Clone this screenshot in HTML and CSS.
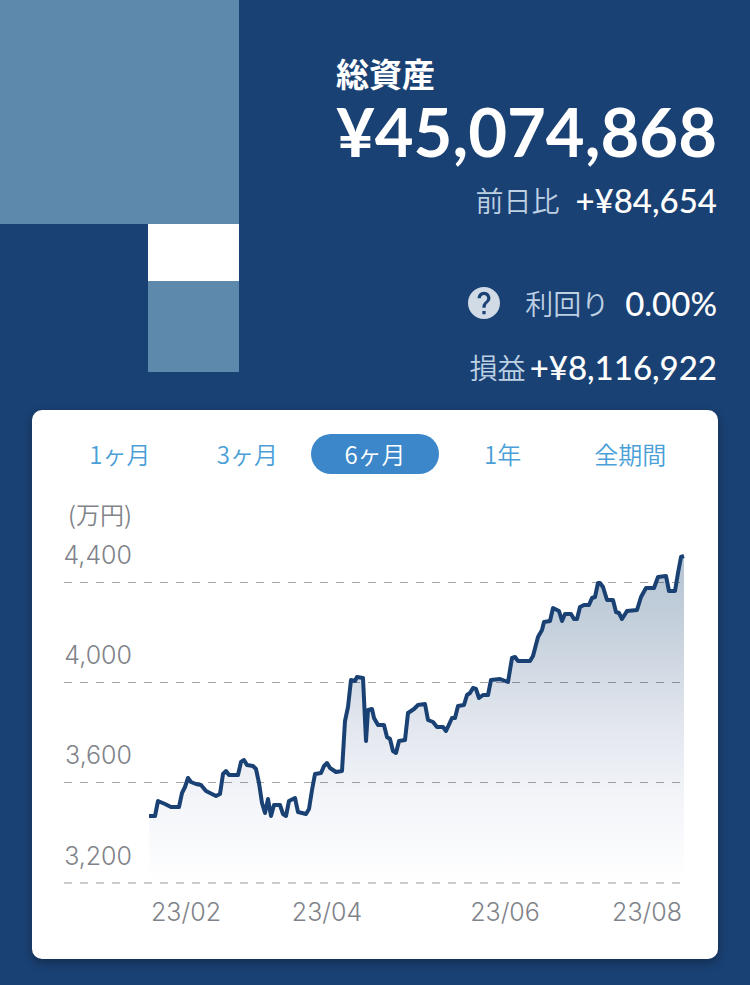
FILE: index.html
```html
<!DOCTYPE html>
<html lang="ja">
<head>
    <meta charset="UTF-8">
    <meta name="viewport" content="width=device-width, initial-scale=1.0">
    <title>総資産</title>
    <link rel="stylesheet" href="styles.css">
</head>
<body>

<header class="hero">
    <div class="blocks">
        <div class="block-large"></div>
        <div class="block-white"></div>
        <div class="block-small"></div>
    </div>
    <div class="summary">
        <div class="total">
            <h1>総資産</h1>
            <p class="amount">¥45,074,868</p>
        </div>
        <dl class="stats">
            <div class="stat stat-day">
                <dt>前日比</dt>
                <dd>+¥84,654</dd>
            </div>
            <div class="stat stat-yield">
                <button class="help" type="button" aria-label="利回りについて">
                    <svg viewBox="2 2 20 20" width="32" height="32" aria-hidden="true">
                        <path fill="currentColor" d="M12 2C6.48 2 2 6.48 2 12s4.48 10 10 10 10-4.48 10-10S17.52 2 12 2zm1 17h-2v-2h2v2zm2.07-7.75l-.9.92C13.45 12.9 13 13.5 13 15h-2v-.5c0-1.1.45-2.1 1.17-2.83l1.24-1.26c.37-.36.59-.86.59-1.41 0-1.1-.9-2-2-2s-2 .9-2 2H8c0-2.21 1.79-4 4-4s4 1.79 4 4c0 .88-.36 1.68-.93 2.25z"/>
                    </svg>
                </button>
                <dt>利回り</dt>
                <dd>0.00%</dd>
            </div>
            <div class="stat stat-profit">
                <dt>損益</dt>
                <dd>+¥8,116,922</dd>
            </div>
        </dl>
    </div>
</header>

<main class="card">
    <nav class="periods">
        <button type="button">1ヶ月</button>
        <button type="button">3ヶ月</button>
        <button type="button" class="active" aria-pressed="true">6ヶ月</button>
        <button type="button">1年</button>
        <button type="button">全期間</button>
    </nav>

    <svg class="chart" viewBox="64 490 622 445" role="img" aria-label="総資産の推移">
        <defs>
            <linearGradient id="fade" gradientUnits="userSpaceOnUse" x1="0" y1="556" x2="0" y2="882">
                <stop offset="0" stop-color="#b6c5d3"/>
                <stop offset="0.2" stop-color="#c3cfdb"/>
                <stop offset="0.5" stop-color="#e1e5ed"/>
                <stop offset="0.75" stop-color="#f3f5f9"/>
                <stop offset="1" stop-color="#ffffff"/>
            </linearGradient>
        </defs>

        <path class="area" d="M149 882V816L155 816 158 801 165 804 171 807 179 807 182 793 185 787 188 778 191 782 196 784 201 785 206 791 212 794 216 796 220 794 223 774 226 771 229 775 238 775 241 762 244 760 247 765 253 766 256 769 259 783 262 803 265 813 268 799 271 816 274 805 280 805 283 814 286 816 289 801 295 798 298 812 306 814 309 809 312 790 315 774 321 773 324 766 327 763 330 768 336 772 342 771 345 721 348 707 351 680 355 681 357 677 363 678 366 741 368 710 372 709 374 718 378 725 384 725 387 737 390 739 393 751 396 753 399 741 405 740 408 713 414 709 418 705 425 704 428 720 433 722 437 727 443 727 446 731 452 718 455 718 458 706 464 705 467 695 470 693 473 688 476 689 479 698 483 695 488 695 491 680 500 679 508 682 512 658 515 657 518 661 530 661 533 656 538 637 542 630 544 622 550 621 553 608 559 611 562 621 565 614 571 614 574 619 577 619 580 607 584 605 589 605 592 598 595 597 598 583 600 583 603 587 607 600 613 600 616 612 619 613 622 619 627 611 637 610 641 597 646 588 654 588 658 577 666 576 669 591 675 591 678 573 681 557 684 556V882Z"/>

        <g class="grid">
            <line x1="64" y1="582.5" x2="684" y2="582.5"/>
            <line x1="64" y1="682.5" x2="684" y2="682.5"/>
            <line x1="64" y1="782.5" x2="684" y2="782.5"/>
            <line class="base" x1="64" y1="883" x2="684" y2="883"/>
        </g>

        <path class="line" d="M149 816L155 816 158 801 165 804 171 807 179 807 182 793 185 787 188 778 191 782 196 784 201 785 206 791 212 794 216 796 220 794 223 774 226 771 229 775 238 775 241 762 244 760 247 765 253 766 256 769 259 783 262 803 265 813 268 799 271 816 274 805 280 805 283 814 286 816 289 801 295 798 298 812 306 814 309 809 312 790 315 774 321 773 324 766 327 763 330 768 336 772 342 771 345 721 348 707 351 680 355 681 357 677 363 678 366 741 368 710 372 709 374 718 378 725 384 725 387 737 390 739 393 751 396 753 399 741 405 740 408 713 414 709 418 705 425 704 428 720 433 722 437 727 443 727 446 731 452 718 455 718 458 706 464 705 467 695 470 693 473 688 476 689 479 698 483 695 488 695 491 680 500 679 508 682 512 658 515 657 518 661 530 661 533 656 538 637 542 630 544 622 550 621 553 608 559 611 562 621 565 614 571 614 574 619 577 619 580 607 584 605 589 605 592 598 595 597 598 583 600 583 603 587 607 600 613 600 616 612 619 613 622 619 627 611 637 610 641 597 646 588 654 588 658 577 666 576 669 591 675 591 678 573 681 557 684 556"/>

        <g class="y-labels">
            <text class="unit" x="132" y="524">(万円)</text>
            <text x="132" y="564">4,400</text>
            <text x="132" y="664">4,000</text>
            <text x="132" y="764">3,600</text>
            <text x="132" y="865">3,200</text>
        </g>
        <g class="x-labels">
            <text x="186" y="921">23/02</text>
            <text x="327" y="921">23/04</text>
            <text x="505" y="921">23/06</text>
            <text x="647" y="921">23/08</text>
        </g>
    </svg>
</main>

</body>
</html>
```
FILE: styles.css
```css
* { box-sizing: border-box; }
body {
    margin: 0;
    background-color: #1a4173;
    color: #fff;
    font-family: "Noto Sans CJK JP", sans-serif;
    font-weight: 350;
}
h1, p, dl, dd { margin: 0; }
button { border: 0; padding: 0; background: none; font: inherit; cursor: pointer; }

/* Top: logo blocks and totals */
.hero { display: flex; justify-content: space-between; padding-bottom: 23px; }
.blocks { display: flex; flex-direction: column; align-items: flex-end; width: 239px; }
.block-large { width: 100%; height: 224px; background-color: #5d89ad; }
.block-white { width: 91px; height: 57px; background-color: #fff; }
.block-small { width: 91px; height: 91px; background-color: #5d89ad; }

.summary { display: flex; flex-direction: column; align-items: flex-end; padding: 53px 33px 0 0; }
h1 { font-size: 33px; line-height: 40px; font-weight: 700; }
.amount { font-family: Lato, sans-serif; font-size: 67px; line-height: 76px; font-weight: 700; }

.stats { display: flex; flex-direction: column; align-items: flex-end; padding-top: 11px; }
.stat { display: flex; align-items: center; height: 40px; }
.stat dt { color: #bdd0e4; font-size: 28px; line-height: 40px; }
.stat dd { font-family: Lato, sans-serif; font-size: 33px; line-height: 40px; font-weight: 500; }
.stat-day { gap: 16px; }
.stat-yield { gap: 16px; margin-top: 63px; }
.stat-profit { gap: 4px; margin-top: 24px; }
.help { display: flex; margin-right: 9px; color: #d0dbe6; }

/* Chart card */
.card {
    margin: 0 32px 26px;
    padding: 24px 0;
    background-color: #fff;
    border-radius: 10px;
    box-shadow: 0 4px 10px rgba(0, 0, 0, 0.3);
}
.periods { display: grid; grid-template-columns: repeat(5, 1fr); padding: 0 24px; }
.periods button { height: 40px; border-radius: 20px; color: #4a9fd8; font-size: 24px; line-height: 40px; }
.periods .active { background-color: #3c87ca; color: #fff; }

.chart { display: block; width: 100%; padding: 16px 32px 0; }
.area { fill: url(#fade); }
.line { fill: none; stroke: #1a4173; stroke-width: 4; stroke-linejoin: round; }
.grid line { stroke: #000; stroke-opacity: 0.35; stroke-width: 1; stroke-dasharray: 8 8; }
.grid .base { stroke-opacity: 0.2; stroke-width: 2; }
.chart text { fill: #808389; font-family: Inter, "Noto Sans CJK JP", sans-serif; font-size: 25px; font-weight: 300; }
.chart .unit { font-family: "Noto Sans CJK JP", sans-serif; font-size: 24px; font-weight: 350; }
.y-labels { text-anchor: end; }
.x-labels { text-anchor: middle; }
```
